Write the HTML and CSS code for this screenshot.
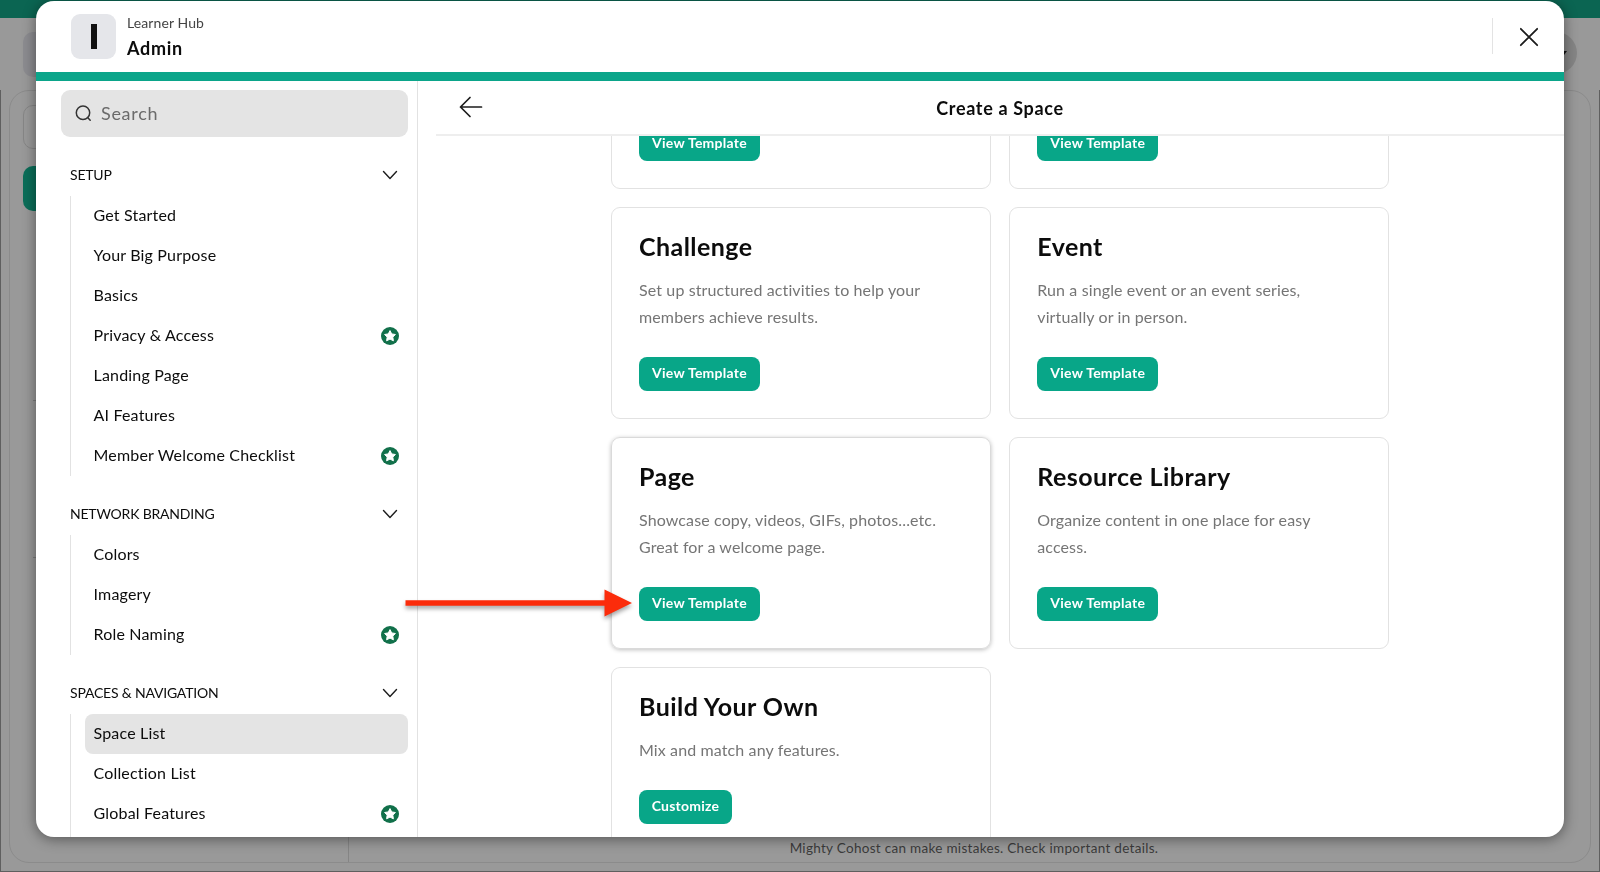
FILE: index.html
```html
<!DOCTYPE html>
<html lang="en">
<head>
    <meta charset="UTF-8">
    <meta name="viewport" content="width=device-width, initial-scale=1.0">
    <title>Learner Hub - Create a Space</title>
    <link rel="stylesheet" href="styles.css">
</head>
<body>

<!-- shared icons -->
<svg class="icon-defs" width="0" height="0">
    <symbol id="icon-chevron" viewBox="0 0 16 10">
        <path d="M1.5 1.5 L8 8.5 L14.5 1.5" fill="none" stroke="#1c1c1c" stroke-width="1.4" stroke-linecap="round" stroke-linejoin="round"/>
    </symbol>
    <symbol id="icon-star" viewBox="0 0 18 18">
        <circle cx="9" cy="9" r="9" fill="#11704a"/>
        <path d="M9 3.6 L10.7 6.9 L14.4 7.5 L11.8 10.1 L12.4 13.8 L9 12.1 L5.6 13.8 L6.2 10.1 L3.6 7.5 L7.3 6.9 Z" fill="#fff" stroke="#fff" stroke-width="1" stroke-linejoin="round"/>
    </symbol>
</svg>

<!-- page behind the dialog -->
<div class="page">
    <div class="page-top"></div>
    <div class="page-header">
        <div class="page-logo"></div>
        <div class="page-user">
            <svg width="6" height="4" viewBox="0 0 6 4"><path d="M0 0 H6 L3 4 Z" fill="#111"/></svg>
        </div>
    </div>
    <div class="page-body">
        <div class="page-panel">
            <div class="page-nav">
                <div class="page-input"></div>
                <div class="page-active"></div>
                <div class="page-rule page-rule-first"></div>
                <div class="page-rule"></div>
            </div>
            <div class="page-chat">
                <p class="page-note">Mighty Cohost can make mistakes. Check important details.</p>
            </div>
        </div>
    </div>
</div>

<div class="modal">
    <header class="modal-header">
        <div class="logo"><span class="logo-bar"></span></div>
        <div class="names">
            <div class="network-name">Learner Hub</div>
            <div class="admin-name">Admin</div>
        </div>
        <div class="close-wrap">
            <svg width="20" height="20" viewBox="0 0 20 20"><path d="M1.8 1.8 L18.2 18.2 M18.2 1.8 L1.8 18.2" stroke="#1c1c1c" stroke-width="1.8" stroke-linecap="round"/></svg>
        </div>
    </header>

    <div class="modal-body">
        <nav class="sidebar">
            <div class="search">
                <svg width="17" height="17" viewBox="0 0 17 17"><circle cx="8" cy="7.8" r="6.7" fill="none" stroke="#333" stroke-width="1.5"/><path d="M12.6 12.6 L15.2 15.3" stroke="#333" stroke-width="1.5" stroke-linecap="round"/></svg>
                <span>Search</span>
            </div>

            <div class="section-title"><span>SETUP</span><svg class="chevron"><use href="#icon-chevron"/></svg></div>
            <ul class="section-list">
                <li>Get Started</li>
                <li>Your Big Purpose</li>
                <li>Basics</li>
                <li>Privacy &amp; Access<svg class="star"><use href="#icon-star"/></svg></li>
                <li>Landing Page</li>
                <li>AI Features</li>
                <li>Member Welcome Checklist<svg class="star"><use href="#icon-star"/></svg></li>
            </ul>

            <div class="section-title"><span>NETWORK BRANDING</span><svg class="chevron"><use href="#icon-chevron"/></svg></div>
            <ul class="section-list">
                <li>Colors</li>
                <li>Imagery</li>
                <li>Role Naming<svg class="star"><use href="#icon-star"/></svg></li>
            </ul>

            <div class="section-title"><span>SPACES &amp; NAVIGATION</span><svg class="chevron"><use href="#icon-chevron"/></svg></div>
            <ul class="section-list section-list-last">
                <li class="active">Space List</li>
                <li>Collection List</li>
                <li>Global Features<svg class="star"><use href="#icon-star"/></svg></li>
            </ul>
        </nav>

        <main class="content">
            <div class="content-header">
                <svg class="back" width="24" height="22" viewBox="0 0 24 22"><path d="M22.5 11 H1.5 M11 1.5 L1.5 11 L11 20.5" fill="none" stroke="#1c1c1c" stroke-width="1.7" stroke-linecap="round" stroke-linejoin="round"/></svg>
                <h1>Create a Space</h1>
            </div>
            <div class="scroll">
                <div class="cards">
                    <div class="card"><button class="btn">View Template</button></div>
                    <div class="card"><button class="btn">View Template</button></div>
                    <div class="card">
                        <h2>Challenge</h2>
                        <p>Set up structured activities to help your<br>members achieve results.</p>
                        <button class="btn">View Template</button>
                    </div>
                    <div class="card">
                        <h2>Event</h2>
                        <p>Run a single event or an event series,<br>virtually or in person.</p>
                        <button class="btn">View Template</button>
                    </div>
                    <div class="card card-hover">
                        <h2>Page</h2>
                        <p>Showcase copy, videos, GIFs, photos...etc.<br>Great for a welcome page.</p>
                        <button class="btn">View Template</button>
                    </div>
                    <div class="card">
                        <h2>Resource Library</h2>
                        <p>Organize content in one place for easy<br>access.</p>
                        <button class="btn">View Template</button>
                    </div>
                    <div class="card card-short">
                        <h2>Build Your Own</h2>
                        <p>Mix and match any features.</p>
                        <button class="btn btn-customize">Customize</button>
                    </div>
                </div>
            </div>
        </main>
    </div>
</div>

<!-- pointer to the Page template -->
<svg class="pointer" width="236" height="40" viewBox="0 0 236 40">
    <path d="M3.5 11.2 H202.5 V0.5 L230 14 L202.5 27.5 V16.8 H3.5 Z" fill="#fb2c0b"/>
</svg>

</body>
</html>
```
FILE: styles.css
```css
* {
    box-sizing: border-box;
}
body {
    margin: 0;
    height: 872px;
    overflow: hidden;
    font-family: Lato, "Open Sans", sans-serif;
    background-color: #999;
    color: #0c0c0c;
}
.icon-defs {
    position: absolute;
}

/* page behind */
.page {
    height: 872px;
    display: flex;
    flex-direction: column;
}
.page-top {
    height: 18px;
    background-color: #0b6552;
}
.page-header {
    height: 72px;
    padding: 14px 23px 0;
    display: flex;
    justify-content: space-between;
}
.page-logo {
    width: 45px;
    height: 45px;
    border-radius: 10px;
    background-color: #8c8c90;
}
.page-user {
    width: 42px;
    height: 42px;
    border-radius: 50%;
    background-color: #868686;
    display: flex;
    align-items: center;
    padding-left: 26px;
}
.page-body {
    flex: 1;
    border: 1px solid #5f5f5f;
    border-top: none;
    padding: 0 8px 8px;
}
.page-panel {
    height: 100%;
    border: 1px solid #8b8b8b;
    border-radius: 20px;
    display: flex;
}
.page-nav {
    width: 339px;
    border-right: 1px solid #858585;
    padding: 14px 13px;
}
.page-input {
    height: 44px;
    border: 1px solid #868686;
    border-radius: 10px;
}
.page-active {
    height: 45px;
    margin-top: 17px;
    border-radius: 10px;
    background-color: #0b6e59;
}
.page-rule {
    height: 1px;
    margin: 156px 0 0 10px;
    background-color: #7d7d7d;
}
.page-rule-first {
    margin-top: 189px;
}
.page-chat {
    flex: 1;
    display: flex;
    justify-content: center;
    align-items: flex-end;
    padding-left: 9px;
}
.page-note {
    margin: 0 0 5px;
    font-size: 13.5px;
    line-height: 18px;
    letter-spacing: 0.3px;
    color: #3b3b3b;
}

/* dialog */
.modal {
    position: fixed;
    top: 1px;
    left: 35.5px;
    width: 1528.5px;
    height: 836px;
    background-color: #fff;
    border-radius: 18px;
    overflow: hidden;
    box-shadow: 0 2px 14px rgba(0, 0, 0, 0.45);
    display: flex;
    flex-direction: column;
}
.modal-header {
    height: 80px;
    flex: none;
    display: flex;
    align-items: flex-start;
    padding: 13px 23px 0 35.5px;
    border-bottom: 9px solid #0ba58a;
}
.logo {
    width: 45px;
    height: 45px;
    border-radius: 9px;
    background-color: #e5e6ea;
    display: flex;
    justify-content: center;
    align-items: center;
}
.logo-bar {
    width: 6px;
    height: 25px;
    background-color: #111;
}
.names {
    margin-left: 11px;
    flex: 1;
}
.network-name {
    font-size: 14px;
    line-height: 18px;
    letter-spacing: 0.1px;
    color: #444;
}
.admin-name {
    margin-top: 4px;
    font-size: 18px;
    line-height: 24px;
    font-weight: bold;
    letter-spacing: 0.7px;
}
.close-wrap {
    height: 36px;
    margin-top: 4px;
    padding: 1px 2px 0 26px;
    border-left: 1px solid #e3e3e3;
    display: flex;
    align-items: center;
}
.modal-body {
    flex: 1;
    min-height: 0;
    display: flex;
}
.sidebar {
    width: 382.5px;
    flex: none;
    border-right: 1px solid #e2e2e2;
    padding: 9px 9px 0 25.5px;
    overflow: hidden;
}
.search {
    height: 46.5px;
    border-radius: 9px;
    background-color: #e4e4e4;
    display: flex;
    align-items: center;
    gap: 9px;
    padding-left: 14px;
    font-size: 18px;
    letter-spacing: 0.7px;
    color: #6b6b6b;
}
.section-title {
    margin-top: 18px;
    height: 41px;
    padding: 0 10px 2px 9px;
    display: flex;
    align-items: center;
    justify-content: space-between;
    font-size: 14px;
    letter-spacing: -0.2px;
}
.chevron {
    width: 16px;
    height: 10px;
    margin-top: 2px;
}
.section-list {
    list-style: none;
    margin: 0 0 0 9px;
    padding: 0 0 0 13.5px;
    border-left: 1px solid #e2e2e2;
}
.section-list-last {
    padding-bottom: 20px;
}
.section-list li {
    height: 40px;
    padding: 0 9px 2px;
    display: flex;
    align-items: center;
    justify-content: space-between;
    border-radius: 8px;
    font-size: 16px;
    letter-spacing: 0.18px;
}
.section-list .active {
    background-color: #e4e4e4;
}
.star {
    width: 18px;
    height: 18px;
    margin-top: 2px;
}
.content {
    flex: 1;
    padding-left: 18px;
    display: flex;
    flex-direction: column;
    min-width: 0;
}
.content-header {
    height: 55px;
    flex: none;
    border-bottom: 2px solid #eee;
    display: grid;
    grid-template-columns: 60px 1fr 60px;
    align-items: center;
}
.back {
    margin: -1px 0 0 23px;
}
.content-header h1 {
    margin: 0;
    text-align: center;
    font-size: 18px;
    line-height: 24px;
    letter-spacing: 0.65px;
}
.scroll {
    flex: 1;
    overflow: hidden;
}
.cards {
    width: 778px;
    margin: -159px auto 0;
    display: grid;
    grid-template-columns: 1fr 1fr;
    grid-auto-rows: 211.5px;
    gap: 18.5px;
}
.card {
    border: 1px solid #e2e2e2;
    border-radius: 9px;
    padding: 26px 27px 27px;
    display: flex;
    flex-direction: column;
    align-items: flex-start;
}
.card-hover {
    border-color: #dadada;
    box-shadow: 0 1px 4px rgba(0, 0, 0, 0.25);
}
.card-short {
    height: 184px;
    border-bottom: none;
}
.card h2 {
    margin: -4px 0 0;
    font-size: 25px;
    line-height: 32px;
    letter-spacing: 0.45px;
}
.card p {
    margin: 15px 0 0;
    font-size: 16px;
    line-height: 26.6px;
    letter-spacing: 0.12px;
    color: #757575;
    white-space: nowrap;
}
.btn {
    width: 121px;
    height: 34px;
    margin-top: auto;
    padding: 0 0 3px;
    border: none;
    border-radius: 8px;
    background-color: #08a688;
    color: #fff;
    font-family: inherit;
    font-size: 14px;
    font-weight: bold;
    letter-spacing: 0.25px;
    flex: none;
}
.btn-customize {
    width: 93px;
}
.pointer {
    position: fixed;
    left: 402px;
    top: 589px;
    filter: drop-shadow(0 3px 2px rgba(0, 0, 0, 0.35));
}
```
